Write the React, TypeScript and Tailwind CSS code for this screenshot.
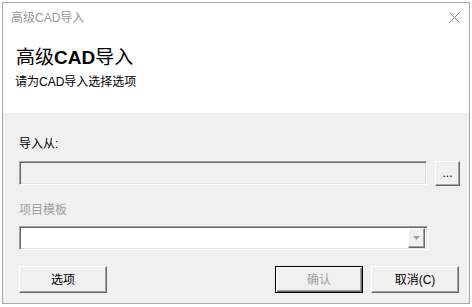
import React from 'react';

const font = { fontFamily: '"Liberation Sans", "Noto Sans CJK SC", sans-serif' };

function RaisedButton({ label, isDefault, disabled, className }: { label: string; isDefault?: boolean; disabled?: boolean; className?: string }) {
  return (
    <button
      className={
        'flex items-center justify-center bg-[#f0f0f0] text-[12px] leading-none ' +
        (isDefault
          ? 'border border-black shadow-[inset_1px_1px_0_#ffffff,inset_-1px_-1px_0_#696969,inset_-2px_-2px_0_#a0a0a0] '
          : 'border border-t-white border-l-white border-r-[#696969] border-b-[#696969] shadow-[inset_-1px_-1px_0_#a0a0a0] ') +
        (disabled ? 'text-[#a0a0a0] ' : 'text-black ') +
        (className || '')
      }
    >
      {label}
    </button>
  );
}

export default function App() {
  return (
    <div className="w-[472px] h-[307px] bg-white p-[2px]" style={font}>
      <div className="w-[468px] h-[302px] border border-[#a9a9a9] flex flex-col">
        {/* Title + header */}
        <div className="bg-white h-[110px] flex flex-col">
          <div className="h-[30px] flex items-center justify-between pl-[8px] pr-[9px]">
            <span className="text-[12px] text-[#999999]">高级CAD导入</span>
            <svg width="11" height="11" viewBox="0 0 11 11" className="mt-[-1px]">
              <path d="M0.5 0.5 L10.5 10.5 M10.5 0.5 L0.5 10.5" stroke="#8a8a8a" strokeWidth="1" />
            </svg>
          </div>
          <div className="pl-[13px] mt-[12px] h-[24px] flex items-center text-[19px] text-black leading-none">
            高级<span className="font-bold">CAD</span>导入
          </div>
          <div className="pl-[12px] mt-[6px] text-[12px] text-black leading-[14px]">请为CAD导入选择选项</div>
        </div>

        {/* Body */}
        <div className="flex-1 bg-[#f0f0f0] pl-[16px] flex flex-col">
          <div className="mt-[24px] h-[14px] leading-[14px] text-[12px] text-black">导入从:</div>
          <div className="mt-[10px] flex items-start">
            <div className="w-[408px] h-[24px] bg-[#f0f0f0] border border-t-[#a0a0a0] border-l-[#a0a0a0] border-r-white border-b-white shadow-[inset_1px_1px_0_#696969,inset_-1px_-1px_0_#e3e3e3]" />
            <RaisedButton label="..." className="ml-[8px] w-[25px] h-[25px] items-end pb-[6px] text-[11px]" />
          </div>
          <div className="mt-[17px] h-[14px] leading-[14px] text-[12px] text-[#a0a0a0]">项目模板</div>
          <div className="mt-[9px] w-[409px] h-[24px] bg-white border border-t-[#a0a0a0] border-l-[#a0a0a0] border-r-white border-b-white shadow-[inset_1px_1px_0_#696969,inset_-1px_-1px_0_#e3e3e3] flex justify-end items-center pr-[2px]">
            <div className="w-[17px] h-[20px] bg-[#f0f0f0] border border-t-white border-l-white border-r-[#696969] border-b-[#696969] shadow-[inset_-1px_-1px_0_#a0a0a0] flex items-center justify-center">
              <svg width="7" height="4" viewBox="0 0 7 4">
                <path d="M0 0 H7 L3.5 4 Z" fill="#a0a0a0" />
              </svg>
            </div>
          </div>
          <div className="mt-[16px] flex items-start pr-[10px]">
            <RaisedButton label="选项" className="w-[88px] h-[27px]" />
            <div className="flex-1" />
            <RaisedButton label="确认" isDefault disabled className="w-[88px] h-[27px]" />
            <RaisedButton label="取消(C)" className="ml-[8px] w-[88px] h-[27px]" />
          </div>
        </div>
      </div>
    </div>
  );
}
